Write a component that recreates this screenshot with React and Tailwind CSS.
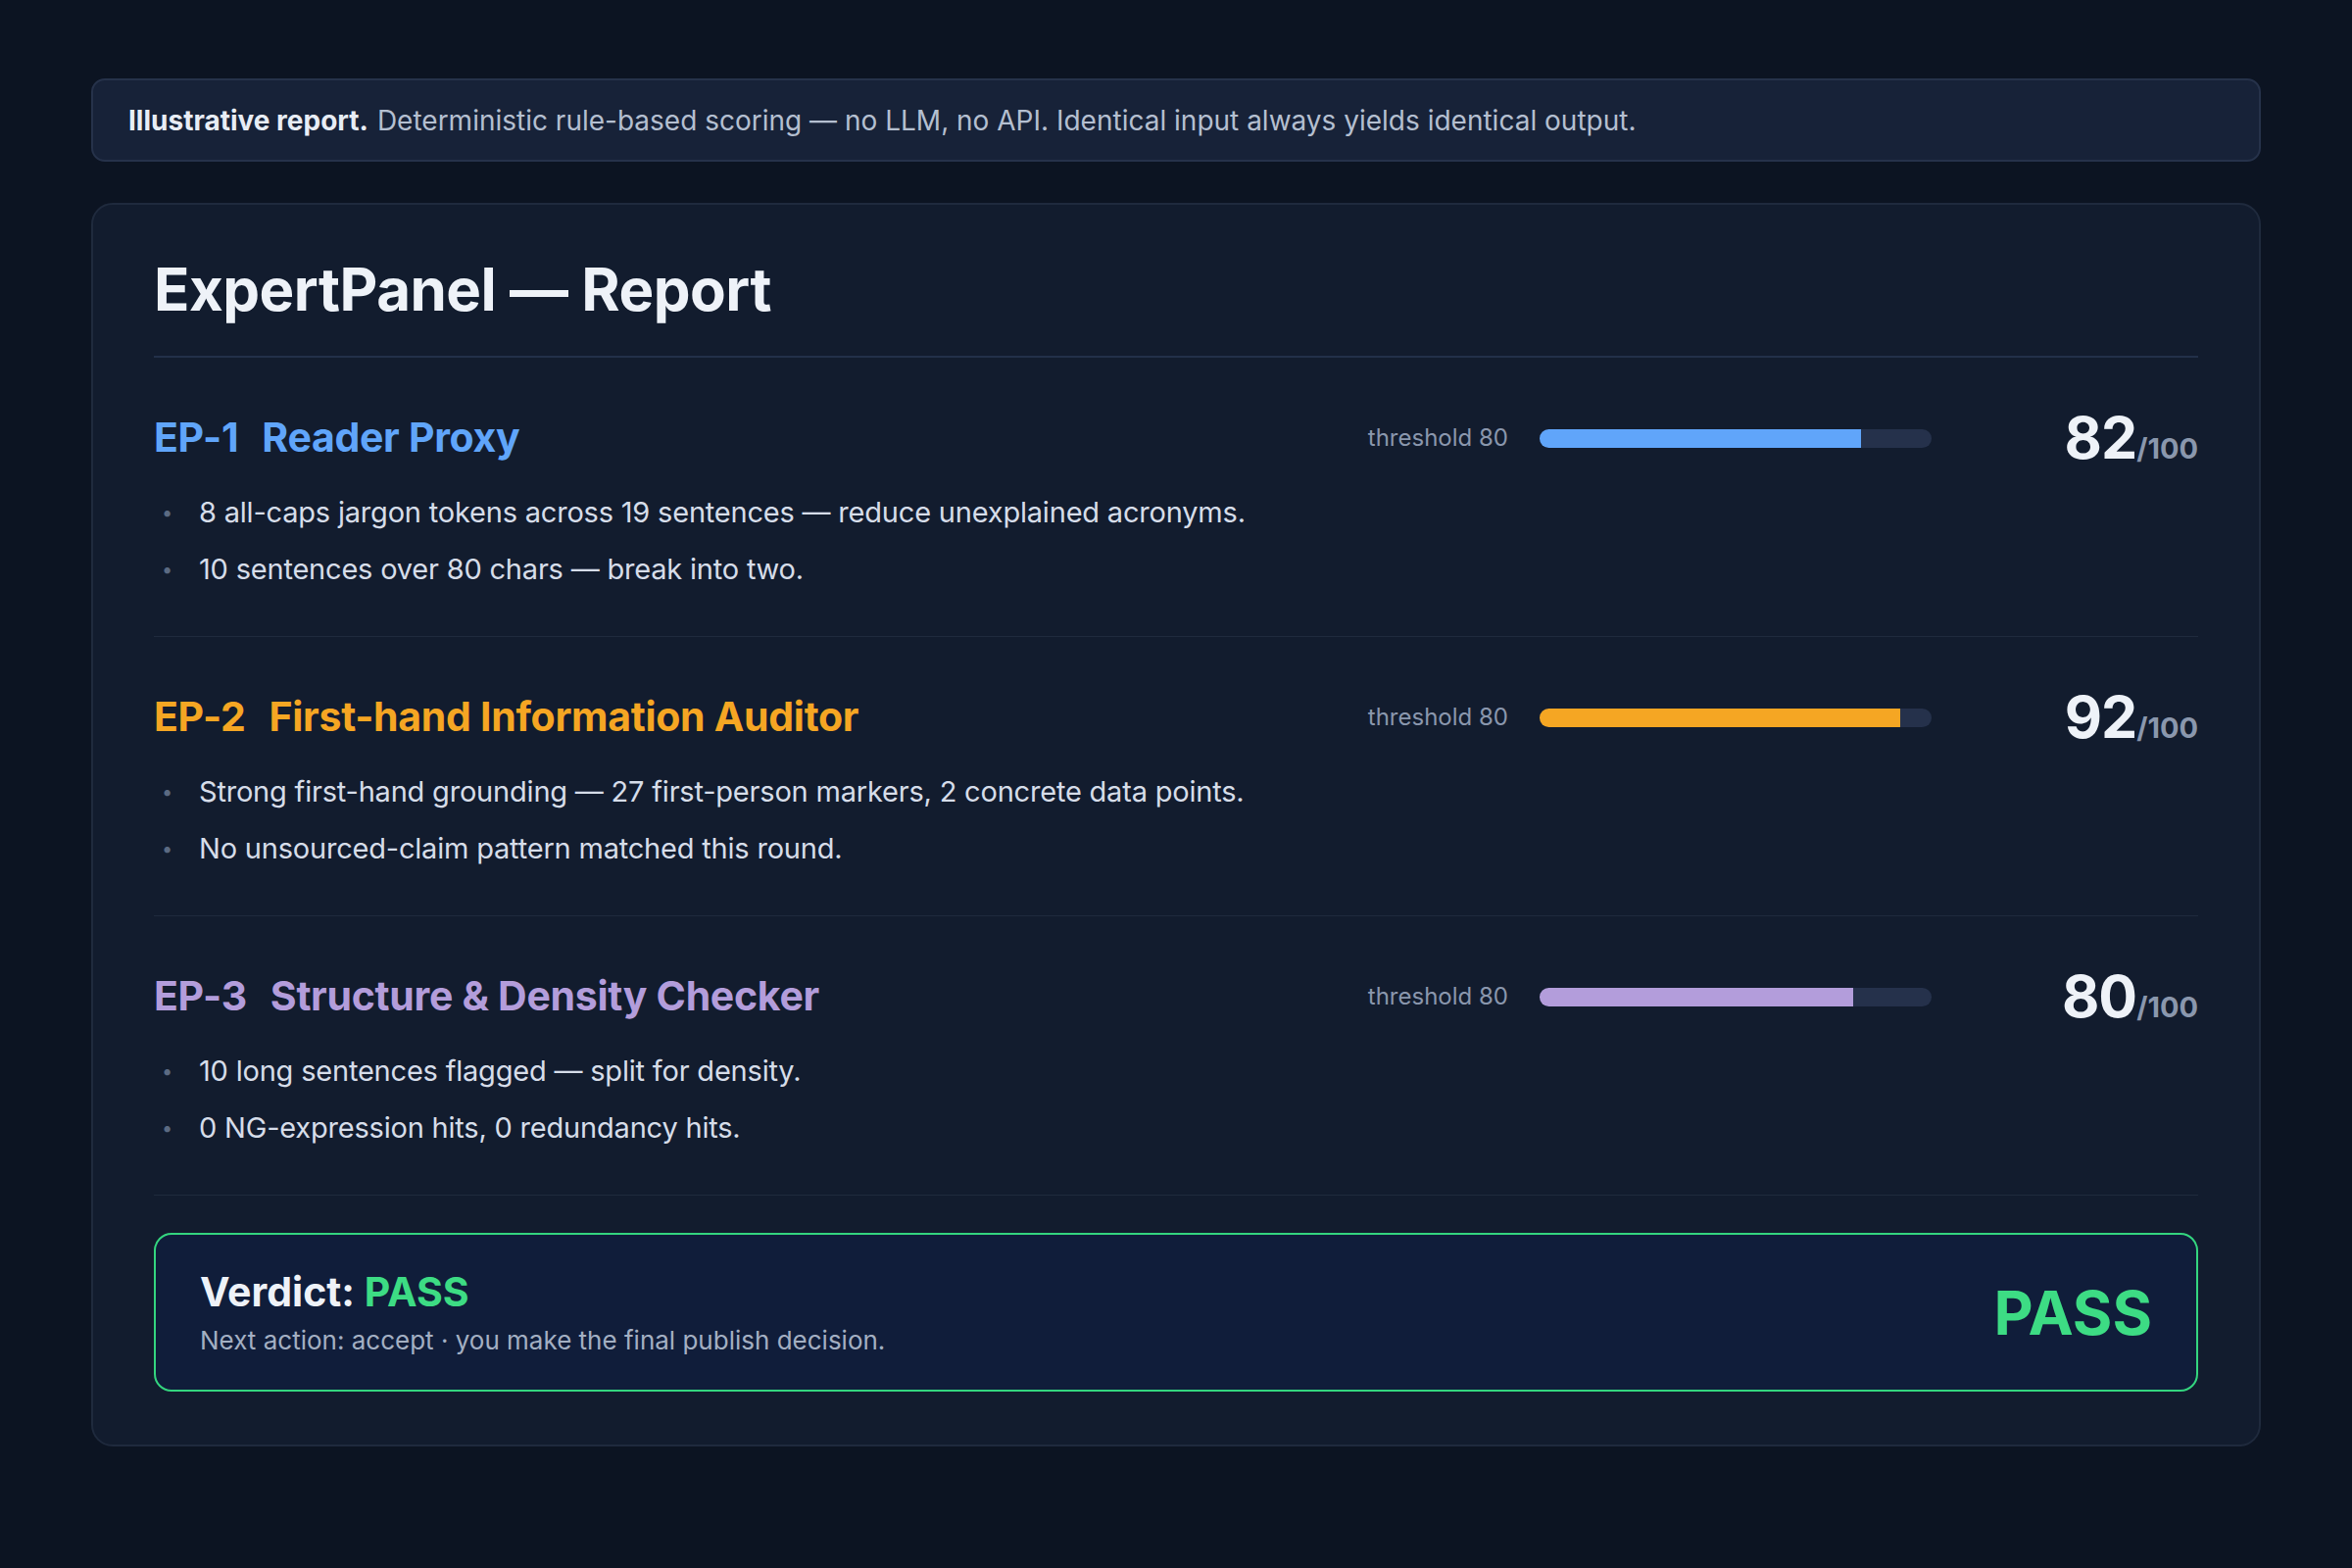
import React from "react";

const experts = [
  {
    id: "EP-1",
    name: "Reader Proxy",
    color: "text-[#60a5fa]",
    bar: "bg-[#60a5fa]",
    score: 82,
    notes: [
      "8 all-caps jargon tokens across 19 sentences — reduce unexplained acronyms.",
      "10 sentences over 80 chars — break into two.",
    ],
  },
  {
    id: "EP-2",
    name: "First-hand Information Auditor",
    color: "text-[#f5a623]",
    bar: "bg-[#f5a623]",
    score: 92,
    notes: [
      "Strong first-hand grounding — 27 first-person markers, 2 concrete data points.",
      "No unsourced-claim pattern matched this round.",
    ],
  },
  {
    id: "EP-3",
    name: "Structure & Density Checker",
    color: "text-[#b39ddb]",
    bar: "bg-[#b39ddb]",
    score: 80,
    notes: [
      "10 long sentences flagged — split for density.",
      "0 NG-expression hits, 0 redundancy hits.",
    ],
  },
];

function Expert({ e }) {
  return (
    <div className="border-b border-[#1f2a3d] pt-[62px] pb-[52px]">
      <div className="flex items-center justify-between h-[40px]">
        <div className={`text-[41px] font-bold tracking-[-0.3px] ${e.color} flex gap-[24px]`}>
          <span>{e.id}</span>
          <span>{e.name}</span>
        </div>
        <div className="flex items-center">
          <span className="text-[24px] text-[#8a97ad]">threshold 80</span>
          <div className="ml-[32px] w-[400px] h-[19px] rounded-full bg-[#25314b] overflow-hidden">
            <div className={`h-full ${e.bar}`} style={{ width: `${e.score}%` }} />
          </div>
          <div className="w-[272px] text-right">
            <span className="text-[59px] font-bold text-[#eef2f8] tracking-[-1px]">{e.score}</span>
            <span className="text-[29px] font-bold text-[#8a97ad]">/100</span>
          </div>
        </div>
      </div>
      <ul className="mt-[40px] flex flex-col gap-[26px]">
        {e.notes.map((n) => (
          <li key={n} className="flex items-center text-[29px] tracking-[-0.2px] text-[#d6dde9] h-[32px]">
            <span className="w-[10px] ml-[8px] mr-[28px] text-[#5b6a82] text-[20px]">•</span>
            {n}
          </li>
        ))}
      </ul>
    </div>
  );
}

export default function App() {
  return (
    <div
      className="min-h-[1600px] bg-[#0c1422] px-[93px] pt-[80px]"
      style={{ fontFamily: "Inter, 'Noto Sans', sans-serif" }}
    >
      <div className="h-[85px] flex items-center px-[36px] rounded-[14px] border-2 border-[#26324a] bg-[#172238] text-[28px] text-[#b4bfd0]">
        <b className="text-[#e8edf5] mr-[9px]">Illustrative report.</b>
        Deterministic rule-based scoring — no LLM, no API. Identical input always yields identical output.
      </div>

      <div className="mt-[42px] rounded-[22px] border-2 border-[#1f2a3d] bg-[#121c2e] px-[62px] pt-[44px] pb-[54px]">
        <h1 className="text-[60px] font-bold tracking-[-0.5px] text-[#eef2f8] pb-[26px] border-b-2 border-[#223049] leading-[84px]">
          ExpertPanel — Report
        </h1>
        {experts.map((e) => (
          <Expert key={e.id} e={e} />
        ))}
        <div className="mt-[38px] h-[162px] rounded-[18px] border-2 border-[#34d57f] bg-[#101d3a] flex items-center justify-between px-[45px]">
          <div>
            <div className="text-[41px] font-bold text-[#eef2f8] leading-[52px]">
              Verdict: <span className="text-[#3ddc84]">PASS</span>
            </div>
            <div className="text-[26px] text-[#a3afc2] mt-[4px]">
              Next action: accept · you make the final publish decision.
            </div>
          </div>
          <div className="text-[62px] font-bold text-[#3ddc84]">PASS</div>
        </div>
      </div>
    </div>
  );
}
